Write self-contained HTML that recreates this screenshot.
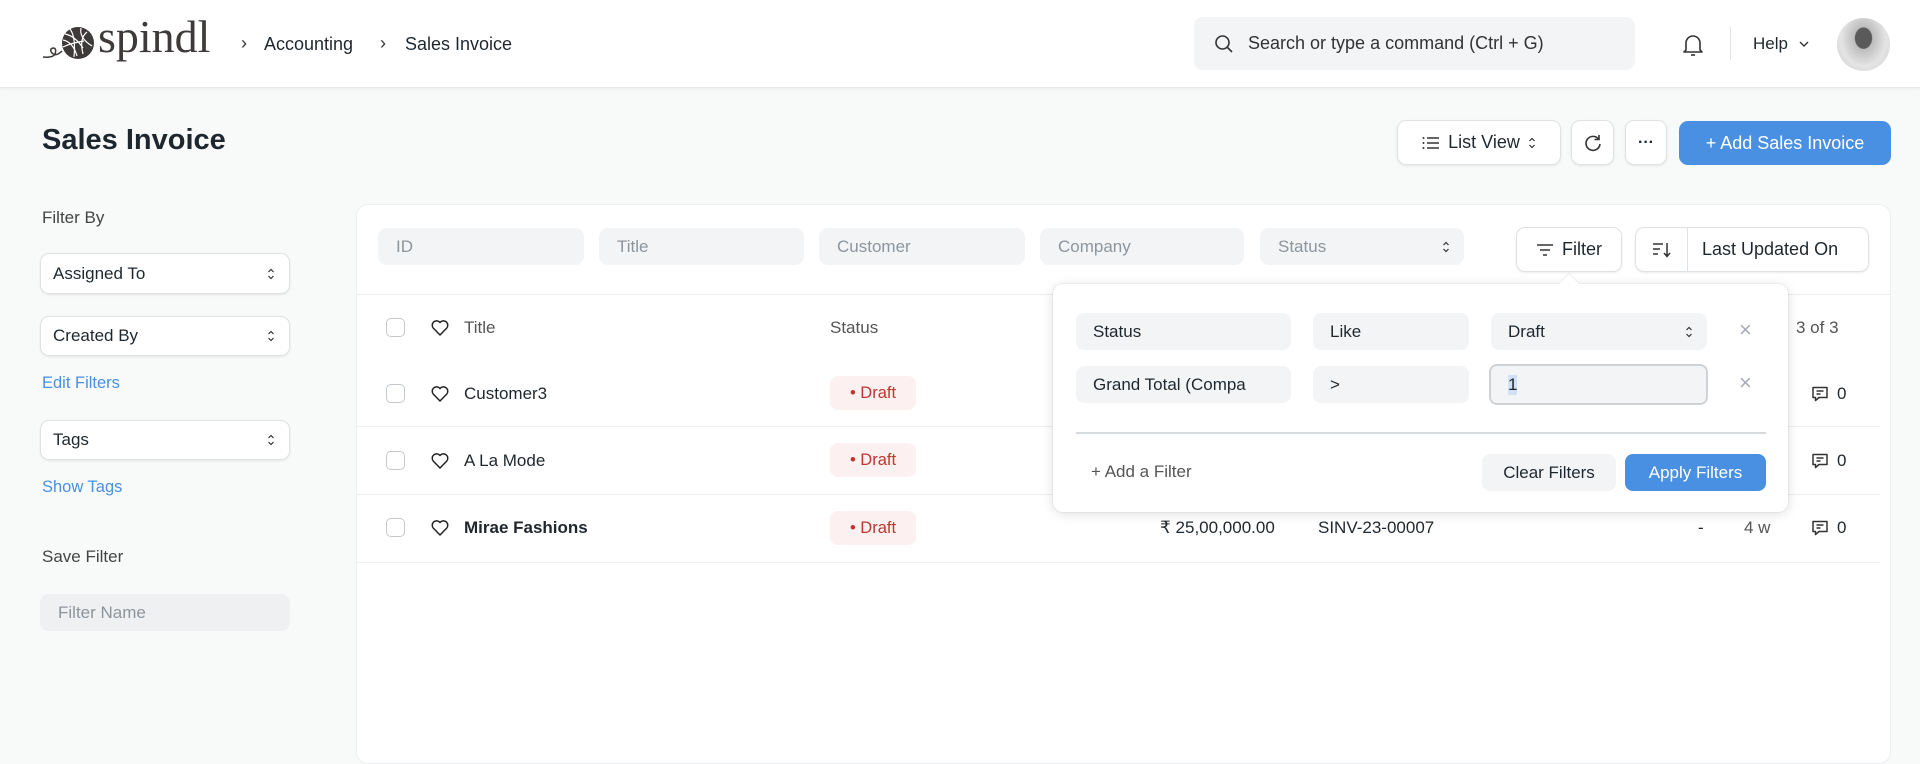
<!DOCTYPE html>
<html><head><meta charset="utf-8"><style>
*{box-sizing:border-box;margin:0;padding:0}
body{width:1920px;height:746px;overflow:hidden;background:#f8f9f9;font-family:"Liberation Sans",sans-serif;color:#1f272e;position:relative;font-size:17px}
.a{position:absolute}
.hdr{left:0;top:0;width:1920px;height:88px;background:#fff;border-bottom:1px solid #e8eaec;box-shadow:0 1px 3px rgba(0,0,0,.05)}
.in{background:#f3f4f6;border-radius:9px;color:#8d959c;padding-left:18px;display:flex;align-items:center}
.btn{background:#fff;border:1px solid #dfe2e5;border-radius:9px;box-shadow:0 1px 2px rgba(0,0,0,.08);display:flex;align-items:center;justify-content:center}
.sel{background:#fff;border:1px solid #dfe2e5;border-radius:9px;box-shadow:0 1px 2px rgba(0,0,0,.08);display:flex;align-items:center;padding-left:12px;color:#1f272e}
.chev{position:absolute;right:14px;top:50%;transform:translateY(-50%)}
.cb{width:19px;height:19px;border:1.5px solid #c4c9ce;border-radius:5px;background:#fff}
.pill{width:86px;height:34px;background:#fdf0f0;border-radius:8px;color:#c0352f;display:flex;align-items:center;justify-content:center;font-size:16.5px}
.sep{height:1px;background:#edeef0}
.fi{background:#f3f4f6;border-radius:8px;display:flex;align-items:center;padding-left:17px;color:#1f272e}
.x{color:#a6acb2;font-size:22px}
</style></head><body>
<svg width="0" height="0" style="position:absolute"><defs>
<symbol id="ud" viewBox="0 0 8 14"><path d="M1.5 5L4 2.5L6.5 5M1.5 9L4 11.5L6.5 9" stroke="#333" stroke-width="1.2" fill="none"/></symbol>
<symbol id="ht" viewBox="0 0 20 20"><path d="M10 17L3.2 10A4 4 0 0110 4.5A4 4 0 0116.8 10Z" stroke="#222" stroke-width="1.5" fill="none" stroke-linejoin="round"/></symbol>
<symbol id="cm" viewBox="0 0 20 20"><path d="M3 3.5h14v10H9l-3.5 3v-3H3z" stroke="#333" stroke-width="1.5" fill="none" stroke-linejoin="round"/><path d="M6.5 7h7M6.5 10h4" stroke="#333" stroke-width="1.4"/></symbol>
</defs></svg>
<div class="a hdr"></div>
<svg class="a" style="left:40px;top:26px" width="56" height="36" viewBox="0 0 56 36">
<circle cx="38" cy="17" r="16" fill="#3e3a39"/>
<path d="M25 8q10 2 18 14M23 14q10 2 14 16M30 3q6 8 4 28M41 2q-2 10 11 18M47 6q-8 6-4 22M23 21q8-4 21-6" stroke="#fff" stroke-width="1.2" fill="none"/>
<path d="M22 25q-6 6-10 2q-3-4 1-5q4 0 2 6q-2 4-12 3" stroke="#3e3a39" stroke-width="1.5" fill="none"/>
</svg>
<div class="a" style="left:98px;top:12px;font-family:'Liberation Serif',serif;font-size:46px;color:#3e3a39;line-height:50px">spindl</div>
<div class="a" style="left:241px;top:33px;font-size:18px;color:#333">›</div>
<div class="a" style="left:264px;top:34px;font-size:18px">Accounting</div>
<div class="a" style="left:380px;top:33px;font-size:18px;color:#333">›</div>
<div class="a" style="left:405px;top:34px;font-size:18px">Sales Invoice</div>
<div class="a in" style="left:1194px;top:17px;width:441px;height:53px;color:#333;font-size:18px;padding-left:20px">
<svg width="20" height="20" viewBox="0 0 20 20" style="margin-right:14px"><circle cx="8.5" cy="8.5" r="6.5" stroke="#333" stroke-width="1.6" fill="none"/><path d="M13.5 13.5l4.5 4.5" stroke="#333" stroke-width="1.6"/></svg>Search or type a command (Ctrl + G)</div>
<svg class="a" style="left:1681px;top:31px" width="24" height="28" viewBox="0 0 24 28"><path d="M5 19V12a7 7 0 0114 0v7l2 2H3z" stroke="#333" stroke-width="1.6" fill="none" stroke-linejoin="round"/><path d="M10 24h4" stroke="#333" stroke-width="1.6"/></svg>
<div class="a" style="left:1730px;top:27px;width:1px;height:33px;background:#e2e4e6"></div>
<div class="a" style="left:1753px;top:34px;font-size:17px">Help</div>
<svg class="a" style="left:1798px;top:39px" width="12" height="10" viewBox="0 0 12 10"><path d="M2 3l4 4 4-4" stroke="#333" stroke-width="1.4" fill="none"/></svg>
<div class="a" style="left:1837px;top:18px;width:53px;height:53px;border-radius:50%;background:radial-gradient(ellipse at 50% 38%,#5a5a5a 0 22%,#bdbdbd 24%,#e4e4e4 60%,#cfcfcf 100%)"></div>

<div class="a" style="left:42px;top:124px;font-size:29px;font-weight:bold">Sales Invoice</div>
<div class="a btn" style="left:1397px;top:120px;width:164px;height:45px;font-size:18px">
<svg width="18" height="16" viewBox="0 0 18 16" style="margin-right:8px"><path d="M5 3h12M5 8h12M5 13h12" stroke="#333" stroke-width="1.4"/><circle cx="1.5" cy="3" r="1" fill="#333"/><circle cx="1.5" cy="8" r="1" fill="#333"/><circle cx="1.5" cy="13" r="1" fill="#333"/></svg>List View <svg width="8" height="14" style="margin-left:8px"><use href="#ud"/></svg></div>
<div class="a btn" style="left:1571px;top:120px;width:43px;height:45px">
<svg width="20" height="20" viewBox="0 0 20 20"><path d="M15.5 6A7 7 0 1 0 17 11" stroke="#333" stroke-width="1.6" fill="none"/><path d="M16 2v4.5h-4.5" stroke="#333" stroke-width="1.6" fill="none"/></svg></div>
<div class="a btn" style="left:1625px;top:120px;width:42px;height:45px;font-size:16px;font-weight:bold">···</div>
<div class="a" style="left:1679px;top:121px;width:212px;height:44px;background:#4a90e2;border-radius:9px;color:#fff;font-size:18px;display:flex;align-items:center;justify-content:center">+ Add Sales Invoice</div>

<div class="a" style="left:42px;top:208px;font-size:17px;color:#444">Filter By</div>
<div class="a sel" style="left:40px;top:253px;width:250px;height:41px">Assigned To<svg class="chev" width="8" height="14"><use href="#ud"/></svg></div>
<div class="a sel" style="left:40px;top:316px;width:250px;height:40px">Created By<svg class="chev" width="8" height="14"><use href="#ud"/></svg></div>
<div class="a" style="left:42px;top:374px;font-size:16.5px;color:#4a90e2">Edit Filters</div>
<div class="a sel" style="left:40px;top:420px;width:250px;height:40px">Tags<svg class="chev" width="8" height="14"><use href="#ud"/></svg></div>
<div class="a" style="left:42px;top:478px;font-size:16.5px;color:#4a90e2">Show Tags</div>
<div class="a" style="left:42px;top:547px;font-size:17px;color:#444">Save Filter</div>
<div class="a in" style="left:40px;top:594px;width:250px;height:37px;background:#eff0f1;padding-left:18px">Filter Name</div>

<div class="a" style="left:356px;top:204px;width:1535px;height:560px;background:#fff;border:1px solid #eceef0;border-radius:12px"></div>
<div class="a in" style="left:378px;top:228px;width:206px;height:37px">ID</div>
<div class="a in" style="left:599px;top:228px;width:205px;height:37px">Title</div>
<div class="a in" style="left:819px;top:228px;width:206px;height:37px">Customer</div>
<div class="a in" style="left:1040px;top:228px;width:204px;height:37px">Company</div>
<div class="a in" style="left:1260px;top:228px;width:204px;height:37px">Status<svg class="chev" width="8" height="14"><use href="#ud"/></svg></div>
<div class="a btn" style="left:1516px;top:227px;width:106px;height:45px;font-size:18px">
<svg width="18" height="16" viewBox="0 0 18 16" style="margin-right:8px"><path d="M1 3h16M4 8h10M7 13h4" stroke="#333" stroke-width="1.5"/></svg>Filter</div>
<div class="a btn" style="left:1635px;top:227px;width:234px;height:45px;font-size:18px;justify-content:flex-start"><span style="width:51px;display:flex;justify-content:center">
<svg width="20" height="18" viewBox="0 0 20 18"><path d="M1 3h10M1 8h7M1 13h5M15 2v13M12 12l3 3.5 3-3.5" stroke="#333" stroke-width="1.5" fill="none"/></svg></span><span style="width:1px;height:43px;background:#dfe2e5;margin-right:14px"></span>Last Updated On</div>
<div class="a sep" style="left:357px;top:294px;width:1533px"></div>

<div class="a cb" style="left:386px;top:318px"></div>
<svg class="a" style="left:430px;top:318px" width="20" height="20"><use href="#ht"/></svg>
<div class="a" style="left:464px;top:318px;color:#555">Title</div>
<div class="a" style="left:830px;top:318px;color:#555">Status</div>
<div class="a" style="left:1796px;top:318px;color:#555">3 of 3</div>

<div class="a cb" style="left:386px;top:384px"></div>
<svg class="a" style="left:430px;top:384px" width="20" height="20"><use href="#ht"/></svg>
<div class="a" style="left:464px;top:384px">Customer3</div>
<div class="a pill" style="left:830px;top:376px">• Draft</div>
<svg class="a" style="left:1810px;top:384px" width="20" height="20"><use href="#cm"/></svg>
<div class="a" style="left:1837px;top:384px">0</div>
<div class="a sep" style="left:357px;top:426px;width:1523px"></div>

<div class="a cb" style="left:386px;top:451px"></div>
<svg class="a" style="left:430px;top:451px" width="20" height="20"><use href="#ht"/></svg>
<div class="a" style="left:464px;top:451px">A La Mode</div>
<div class="a pill" style="left:830px;top:443px">• Draft</div>
<svg class="a" style="left:1810px;top:451px" width="20" height="20"><use href="#cm"/></svg>
<div class="a" style="left:1837px;top:451px">0</div>
<div class="a sep" style="left:357px;top:494px;width:1523px"></div>

<div class="a cb" style="left:386px;top:518px"></div>
<svg class="a" style="left:430px;top:518px" width="20" height="20"><use href="#ht"/></svg>
<div class="a" style="left:464px;top:518px;font-weight:bold">Mirae Fashions</div>
<div class="a pill" style="left:830px;top:511px">• Draft</div>
<div class="a" style="left:1160px;top:518px">₹ 25,00,000.00</div>
<div class="a" style="left:1318px;top:518px">SINV-23-00007</div>
<div class="a" style="left:1698px;top:518px">-</div>
<div class="a" style="left:1744px;top:518px;color:#555">4 w</div>
<svg class="a" style="left:1810px;top:518px" width="20" height="20"><use href="#cm"/></svg>
<div class="a" style="left:1837px;top:518px">0</div>
<div class="a sep" style="left:357px;top:562px;width:1523px"></div>

<div class="a" style="left:1053px;top:284px;width:735px;height:228px;background:#fff;border-radius:10px;box-shadow:0 2px 12px rgba(0,0,0,.13),0 0 0 1px rgba(0,0,0,.04)"></div>
<div class="a" style="left:1562px;top:277px;width:14px;height:14px;background:#fff;transform:rotate(45deg);box-shadow:-1px -1px 1px rgba(0,0,0,.06)"></div>
<div class="a fi" style="left:1076px;top:313px;width:215px;height:37px">Status</div>
<div class="a fi" style="left:1313px;top:313px;width:156px;height:37px">Like</div>
<div class="a fi" style="left:1491px;top:313px;width:216px;height:37px">Draft<svg class="chev" width="8" height="14"><use href="#ud"/></svg></div>
<div class="a x" style="left:1739px;top:317px">×</div>
<div class="a fi" style="left:1076px;top:366px;width:215px;height:37px">Grand Total (Compa</div>
<div class="a fi" style="left:1313px;top:366px;width:156px;height:37px">&gt;</div>
<div class="a fi" style="left:1489px;top:364px;width:219px;height:41px;border:2px solid #d0d3d6;padding-left:17px"><span style="background:#cfe0f7">1</span></div>
<div class="a x" style="left:1739px;top:370px">×</div>
<div class="a" style="left:1076px;top:432px;width:690px;height:1.5px;background:#d8dbde"></div>
<div class="a" style="left:1091px;top:462px;color:#555">+ Add a Filter</div>
<div class="a" style="left:1482px;top:454px;width:134px;height:37px;background:#f3f4f6;border-radius:8px;display:flex;align-items:center;justify-content:center">Clear Filters</div>
<div class="a" style="left:1625px;top:454px;width:141px;height:37px;background:#4a90e2;border-radius:8px;color:#fff;display:flex;align-items:center;justify-content:center">Apply Filters</div>
</body></html>
